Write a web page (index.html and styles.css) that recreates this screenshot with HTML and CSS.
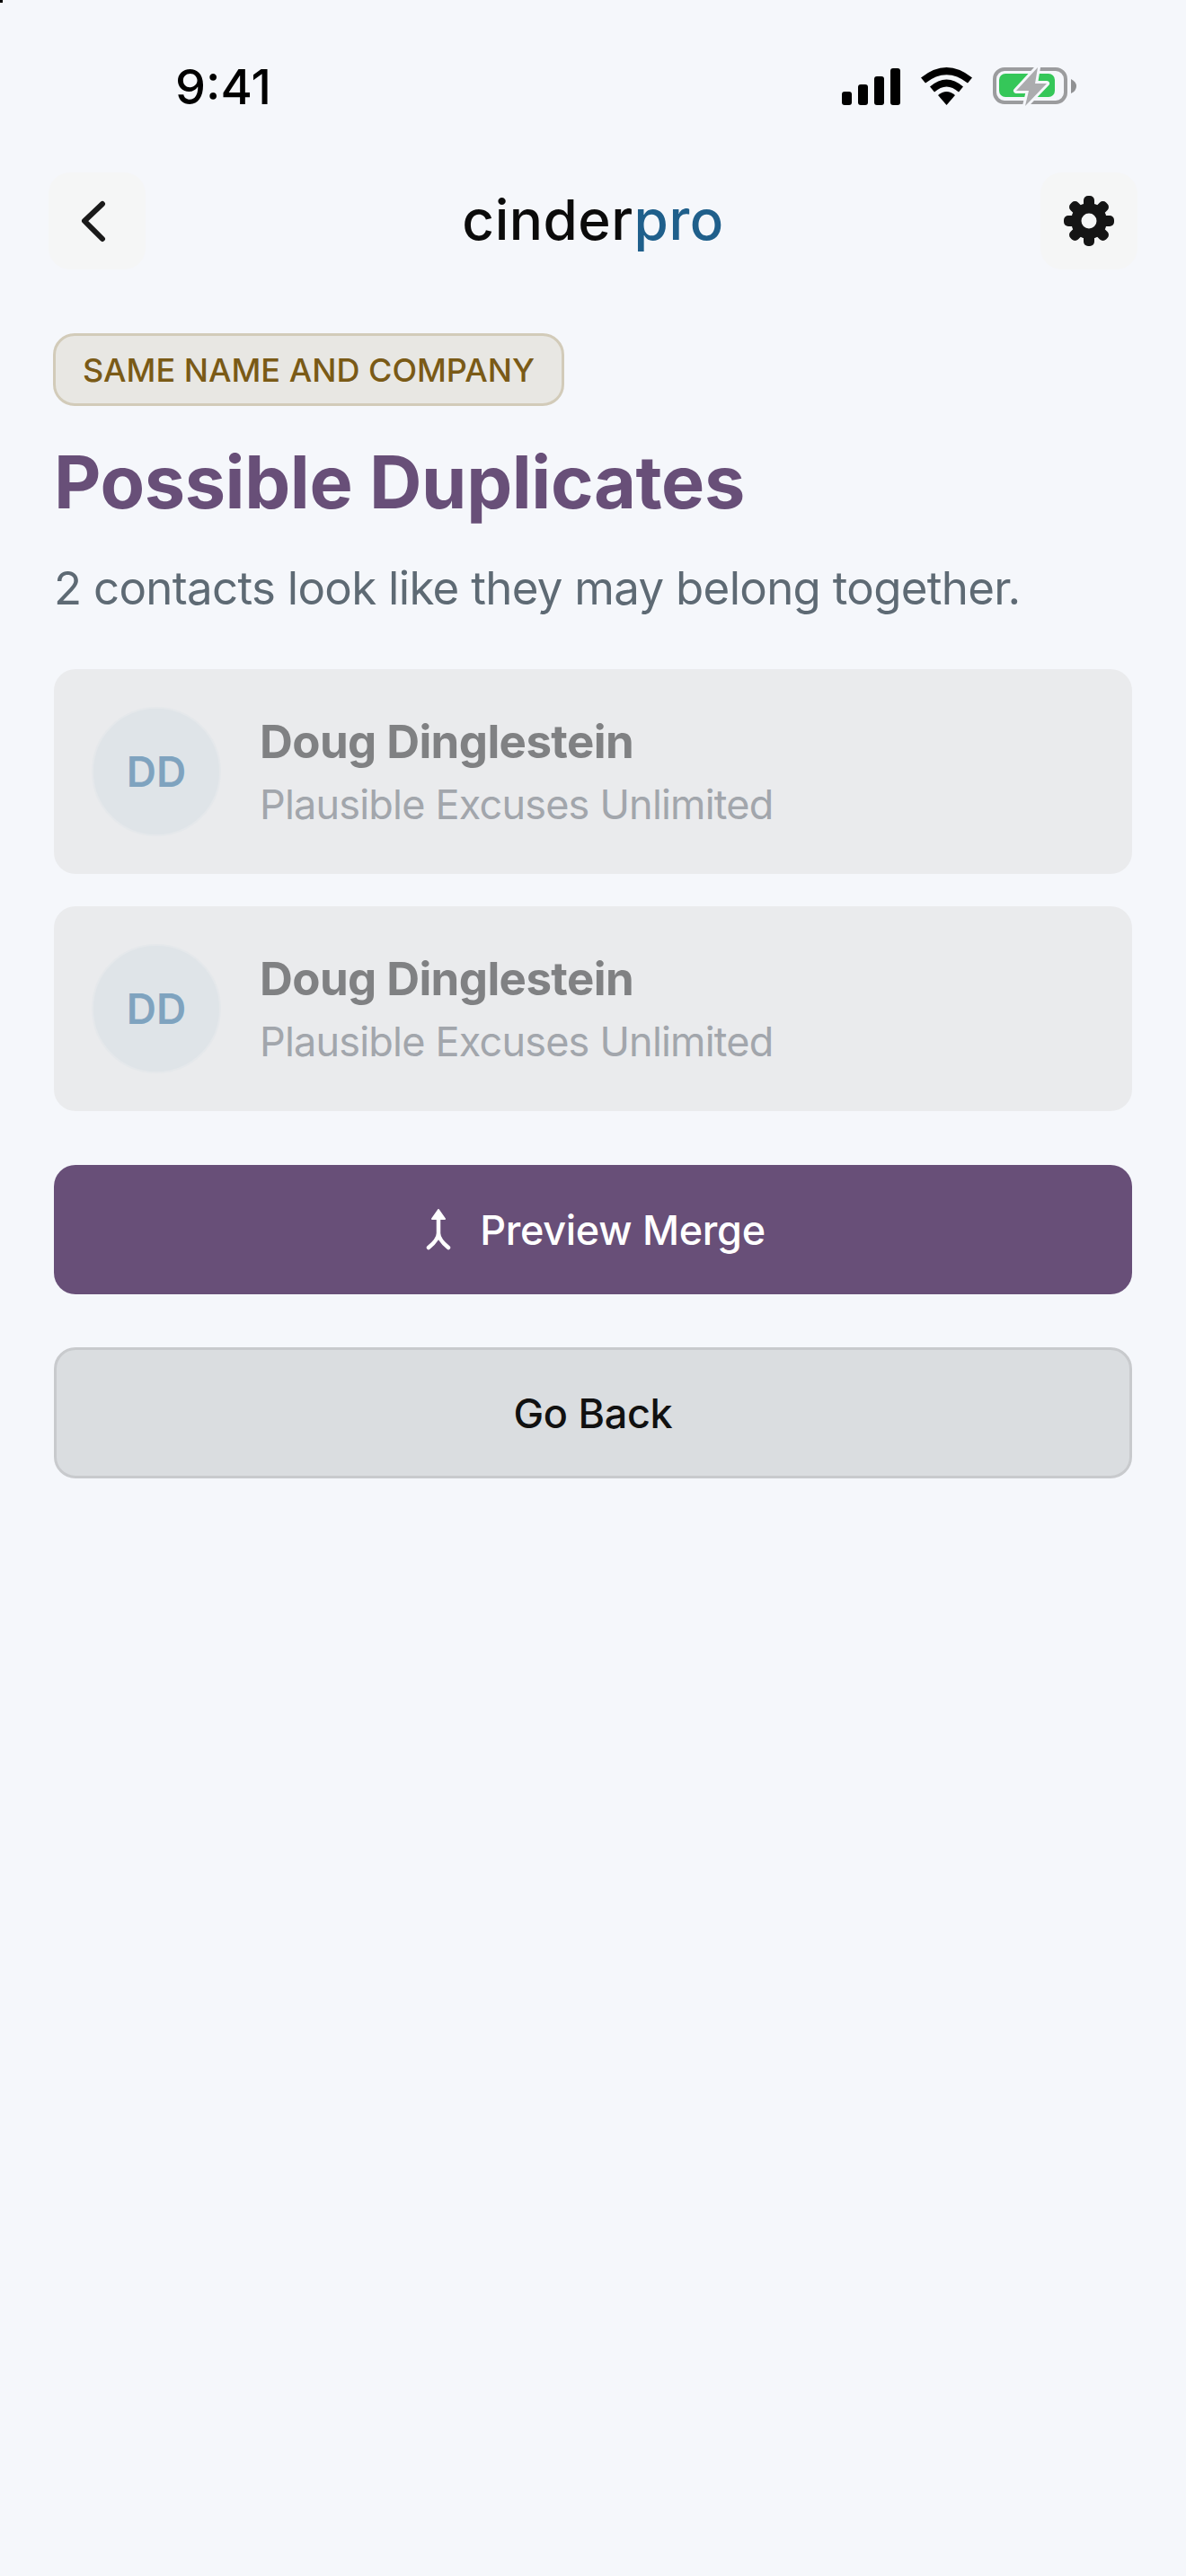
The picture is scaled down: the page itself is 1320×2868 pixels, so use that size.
FILE: index.html
```html
<!DOCTYPE html>
<html lang="en">
<head>
  <meta charset="UTF-8">
  <meta name="viewport" content="width=device-width, initial-scale=1">
  <title>Possible Duplicates</title>
  <link rel="stylesheet" href="styles.css">
</head>
<body>
  <div class="corner-mark"></div>
  <div class="status-bar">
    <span class="time">9:41</span>
    <div class="status-icons">
      <svg class="signal" width="65" height="41" viewBox="0 0 65 41">
        <rect x="0" y="26" width="11" height="15" rx="3"/>
        <rect x="18" y="18" width="11" height="23" rx="3"/>
        <rect x="36" y="9" width="11" height="32" rx="3"/>
        <rect x="54" y="0" width="11" height="41" rx="3"/>
      </svg>
      <svg class="wifi" width="57" height="42" viewBox="0 0 57 42">
        <path d="M28.500 42 L19 31 Q28.500 23 38 31 Z"/>
        <path d="M10 21.500 Q28.500 5.500 47 21.500 L42 27.500 Q28.500 15.500 15 27.500 Z"/>
        <path d="M0 11.500 Q28.500 -11.500 57 11.500 L52 17.500 Q28.500 -1 5 17.500 Z"/>
      </svg>
      <svg class="battery" width="93" height="46" viewBox="0 0 93 46">
        <rect x="2" y="4" width="79" height="37" rx="11" fill="none" stroke="#9b9c9e" stroke-width="4"/>
        <rect x="7" y="9" width="62" height="26" rx="7" fill="#35c759"/>
        <path d="M87 15 Q93 18 93 23 Q93 28 87 31 Z" fill="#909193"/>
        <path d="M50 2 L26 28 L40 28 L36 45 L60 20 L47 20 Z" fill="#abacae" stroke="#f5f7fb" stroke-width="6" stroke-linejoin="round" paint-order="stroke"/>
      </svg>
    </div>
  </div>

  <header class="top-bar">
    <button class="icon-btn" aria-label="Back">
      <svg width="40" height="56" viewBox="0 0 40 56">
        <path d="M26 9 L6 28 L26 48" fill="none" stroke="#1a1a1a" stroke-width="6" stroke-linecap="round" stroke-linejoin="round"/>
      </svg>
    </button>
    <div class="logo">cinder<span class="logo-pro">pro</span></div>
    <button class="icon-btn" aria-label="Settings">
      <svg width="56" height="56" viewBox="0 0 56 56">
        <g fill="#151515">
          <circle cx="28" cy="28" r="20"/>
          <rect x="22" y="0" width="12" height="56" rx="5"/>
          <rect x="22" y="0" width="12" height="56" rx="5" transform="rotate(45 28 28)"/>
          <rect x="22" y="0" width="12" height="56" rx="5" transform="rotate(90 28 28)"/>
          <rect x="22" y="0" width="12" height="56" rx="5" transform="rotate(135 28 28)"/>
          <circle cx="28" cy="28" r="8.500" fill="#f5f6f6"/>
        </g>
      </svg>
    </button>
  </header>

  <main class="content">
    <span class="reason-chip">SAME NAME AND COMPANY</span>
    <h1>Possible Duplicates</h1>
    <p class="subtitle">2 contacts look like they may belong together.</p>

    <div class="contact-card">
      <div class="avatar">DD</div>
      <div class="contact-info">
        <div class="contact-name">Doug Dinglestein</div>
        <div class="contact-company">Plausible Excuses Unlimited</div>
      </div>
    </div>
    <div class="contact-card">
      <div class="avatar">DD</div>
      <div class="contact-info">
        <div class="contact-name">Doug Dinglestein</div>
        <div class="contact-company">Plausible Excuses Unlimited</div>
      </div>
    </div>

    <button class="btn btn-primary">
      <svg width="28" height="46" viewBox="0 0 28 46">
        <path d="M14 6 V27 Q14 34 3 43 M14 27 Q14 34 25 43" fill="none" stroke="#fff" stroke-width="4.500" stroke-linecap="round"/>
        <path d="M14 1 L21 11 L7 11 Z" fill="#fff" stroke="#fff" stroke-width="2" stroke-linejoin="round"/>
      </svg>
      Preview Merge
    </button>
    <button class="btn btn-secondary">Go Back</button>
  </main>
</body>
</html>
```

FILE: styles.css
```css
body {
  font-family: Inter, sans-serif;
  background-color: #f5f7fb;
  margin: 0;
  height: 2868px;
  overflow: hidden;
}
button {
  font-family: inherit;
  cursor: pointer;
}
.corner-mark {
  position: absolute;
  top: 0;
  left: 0;
  width: 3px;
  height: 3px;
  background: #000;
}
.status-bar {
  display: flex;
  justify-content: space-between;
  align-items: center;
  height: 192px;
  padding: 0 122px 0 195px;
  box-sizing: border-box;
}
.time {
  font-size: 54px;
  font-weight: 500;
  color: #000;
}
.status-icons {
  display: flex;
  align-items: center;
  gap: 23px;
}
.top-bar {
  display: flex;
  justify-content: space-between;
  align-items: center;
  padding: 0 54px;
}
.icon-btn {
  display: flex;
  align-items: center;
  justify-content: center;
  width: 108px;
  height: 108px;
  padding: 0;
  border: none;
  border-radius: 24px;
  background: #f5f6f6;
}
.logo {
  padding-bottom: 4px;
  font-size: 62px;
  font-weight: 550;
  letter-spacing: 0.5px;
  color: #0b0b0b;
}
.logo-pro {
  color: #1f5f8b;
}
.content {
  display: flex;
  flex-direction: column;
  align-items: flex-start;
  padding: 71px 60px 0;
}
.reason-chip {
  height: 81px;
  box-sizing: border-box;
  display: flex;
  align-items: center;
  padding: 0 30px;
  margin-left: -1px;
  background: #e8e7e3;
  border: 3px solid #d2cbb9;
  border-radius: 24px;
  color: #7a5a16;
  font-size: 36px;
  font-weight: 500;
}
h1 {
  margin: 36px 0 0;
  font-size: 81px;
  line-height: 98px;
  font-weight: 700;
  letter-spacing: -0.4px;
  color: #684f78;
}
.subtitle {
  margin: 36px 0 57px;
  font-size: 51px;
  line-height: 66px;
  letter-spacing: -0.7px;
  color: #5e6a74;
}
.contact-card {
  display: flex;
  align-items: center;
  gap: 43px;
  width: 100%;
  height: 228px;
  box-sizing: border-box;
  padding: 0 42px;
  margin-bottom: 36px;
  background: #eaebed;
  border-radius: 24px;
}
.avatar {
  display: flex;
  align-items: center;
  justify-content: center;
  width: 144px;
  height: 144px;
  box-sizing: border-box;
  border: 2px solid #e5e8eb;
  border-radius: 50%;
  background: #dfe4e8;
  color: #7fa3bf;
  font-size: 46px;
  font-weight: 600;
}
.contact-name {
  font-size: 51px;
  line-height: 66px;
  font-weight: 700;
  letter-spacing: -0.6px;
  color: #808183;
}
.contact-company {
  margin-top: 7px;
  font-size: 45px;
  line-height: 60px;
  letter-spacing: -0.8px;
  color: #a2a6ac;
}
.btn {
  display: flex;
  align-items: center;
  justify-content: center;
  gap: 32px;
  width: 100%;
  border-radius: 24px;
  font-size: 45px;
  font-weight: 500;
  letter-spacing: -0.3px;
}
.btn-primary {
  height: 144px;
  margin-top: 24px;
  padding-left: 12px;
  border: none;
  background: #684f78;
  color: #fff;
}
.btn-secondary {
  height: 146px;
  margin-top: 59px;
  border: 3px solid #c8cacd;
  background: #dadde0;
  color: #111;
}
```
